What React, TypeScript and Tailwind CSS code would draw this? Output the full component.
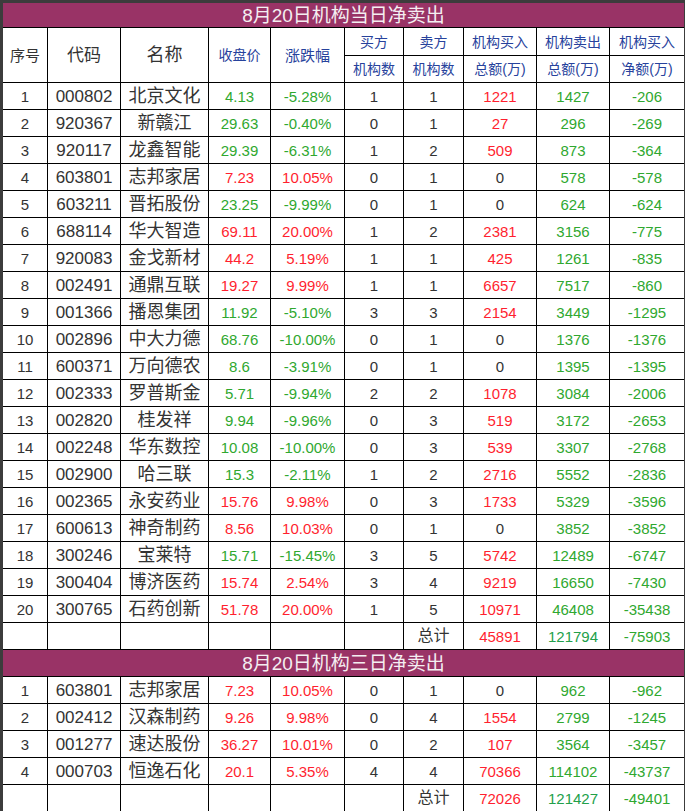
import React from "react";

type Row = [string, string, string, string, string, string, string, string, string, string];

const day: Row[] = [
  ["1", "000802", "北京文化", "4.13", "-5.28%", "1", "1", "1221", "1427", "-206"],
  ["2", "920367", "新赣江", "29.63", "-0.40%", "0", "1", "27", "296", "-269"],
  ["3", "920117", "龙鑫智能", "29.39", "-6.31%", "1", "2", "509", "873", "-364"],
  ["4", "603801", "志邦家居", "7.23", "10.05%", "0", "1", "0", "578", "-578"],
  ["5", "603211", "晋拓股份", "23.25", "-9.99%", "0", "1", "0", "624", "-624"],
  ["6", "688114", "华大智造", "69.11", "20.00%", "1", "2", "2381", "3156", "-775"],
  ["7", "920083", "金戈新材", "44.2", "5.19%", "1", "1", "425", "1261", "-835"],
  ["8", "002491", "通鼎互联", "19.27", "9.99%", "1", "1", "6657", "7517", "-860"],
  ["9", "001366", "播恩集团", "11.92", "-5.10%", "3", "3", "2154", "3449", "-1295"],
  ["10", "002896", "中大力德", "68.76", "-10.00%", "0", "1", "0", "1376", "-1376"],
  ["11", "600371", "万向德农", "8.6", "-3.91%", "0", "1", "0", "1395", "-1395"],
  ["12", "002333", "罗普斯金", "5.71", "-9.94%", "2", "2", "1078", "3084", "-2006"],
  ["13", "002820", "桂发祥", "9.94", "-9.96%", "0", "3", "519", "3172", "-2653"],
  ["14", "002248", "华东数控", "10.08", "-10.00%", "0", "3", "539", "3307", "-2768"],
  ["15", "002900", "哈三联", "15.3", "-2.11%", "1", "2", "2716", "5552", "-2836"],
  ["16", "002365", "永安药业", "15.76", "9.98%", "0", "3", "1733", "5329", "-3596"],
  ["17", "600613", "神奇制药", "8.56", "10.03%", "0", "1", "0", "3852", "-3852"],
  ["18", "300246", "宝莱特", "15.71", "-15.45%", "3", "5", "5742", "12489", "-6747"],
  ["19", "300404", "博济医药", "15.74", "2.54%", "3", "4", "9219", "16650", "-7430"],
  ["20", "300765", "石药创新", "51.78", "20.00%", "1", "5", "10971", "46408", "-35438"],
];

const three: Row[] = [
  ["1", "603801", "志邦家居", "7.23", "10.05%", "0", "1", "0", "962", "-962"],
  ["2", "002412", "汉森制药", "9.26", "9.98%", "0", "4", "1554", "2799", "-1245"],
  ["3", "001277", "速达股份", "36.27", "10.01%", "0", "2", "107", "3564", "-3457"],
  ["4", "000703", "恒逸石化", "20.1", "5.35%", "4", "4", "70366", "114102", "-43737"],
];

const COLS = "grid grid-cols-[44px_72px_87px_61px_73px_58px_59px_72px_72px_74px] gap-px";
const NUM = "font-['Liberation_Sans',Arial,sans-serif]";
const CJK = "font-['Liberation_Sans','Noto_Sans_CJK_SC',sans-serif]";
const RED = "text-[#ff1f2f]";
const GREEN = "text-[#2fa82f]";
const DARK = "text-[#333333]";
const BLUE = "text-[#27429c]";

function Cell({ children, cls = "" }: { children?: React.ReactNode; cls?: string }) {
  return (
    <div className={`flex items-center justify-center bg-white leading-none whitespace-nowrap ${cls}`}>
      {children}
    </div>
  );
}

function DataRow({ r }: { r: Row }) {
  const up = !r[4].startsWith("-");
  const pc = up ? RED : GREEN;
  const buy = r[7] === "0" ? DARK : RED;
  return (
    <div className={`${COLS} h-[26px]`}>
      <Cell cls={`${NUM} ${DARK} text-[15px]`}>{r[0]}</Cell>
      <Cell cls={`${NUM} ${DARK} text-[17px]`}>{r[1]}</Cell>
      <Cell cls={`${CJK} ${DARK} text-[18px]`}>{r[2]}</Cell>
      <Cell cls={`${NUM} ${pc} text-[15px]`}>{r[3]}</Cell>
      <Cell cls={`${NUM} ${pc} text-[15px]`}>{r[4]}</Cell>
      <Cell cls={`${NUM} ${DARK} text-[15px]`}>{r[5]}</Cell>
      <Cell cls={`${NUM} ${DARK} text-[15px]`}>{r[6]}</Cell>
      <Cell cls={`${NUM} ${buy} text-[15px]`}>{r[7]}</Cell>
      <Cell cls={`${NUM} ${GREEN} text-[15px]`}>{r[8]}</Cell>
      <Cell cls={`${NUM} ${GREEN} text-[15px]`}>{r[9]}</Cell>
    </div>
  );
}

function TotalRow({ a, b, c }: { a: string; b: string; c: string }) {
  return (
    <div className={`${COLS} h-[26px]`}>
      <Cell />
      <Cell />
      <Cell />
      <Cell />
      <Cell />
      <Cell />
      <Cell cls={`${CJK} ${DARK} text-[16px] bg-[#dce6f1]`}>总计</Cell>
      <Cell cls={`${NUM} ${RED} text-[15px] bg-[#dce6f1]`}>{a}</Cell>
      <Cell cls={`${NUM} text-[#22a04a] text-[15px] bg-[#dce6f1]`}>{b}</Cell>
      <Cell cls={`${NUM} ${GREEN} text-[15px] bg-[#dce6f1]`}>{c}</Cell>
    </div>
  );
}

function Title({ text, h }: { text: string; h: string }) {
  return (
    <div
      className={`${h} flex items-center justify-center bg-[#993366] text-[#f4eef1] text-[19px] leading-none ${CJK}`}
    >
      {text}
    </div>
  );
}

function Header() {
  const two = (a: string, b: string) => (
    <div className="flex flex-col gap-px bg-black">
      <Cell cls={`${CJK} ${BLUE} text-[14px] h-[27px]`}>{a}</Cell>
      <Cell cls={`${CJK} ${BLUE} text-[14px] h-[26px]`}>{b}</Cell>
    </div>
  );
  return (
    <div className={`${COLS} h-[54px]`}>
      <Cell cls={`${CJK} ${DARK} text-[15px]`}>序号</Cell>
      <Cell cls={`${CJK} ${DARK} text-[17px]`}>代码</Cell>
      <Cell cls={`${CJK} ${DARK} text-[18px]`}>名称</Cell>
      <Cell cls={`${CJK} ${BLUE} text-[14px]`}>收盘价</Cell>
      <Cell cls={`${CJK} ${BLUE} text-[15px]`}>涨跌幅</Cell>
      {two("买方", "机构数")}
      {two("卖方", "机构数")}
      {two("机构买入", "总额(万)")}
      {two("机构卖出", "总额(万)")}
      {two("机构买入", "净额(万)")}
    </div>
  );
}

export default function App() {
  return (
    <div className="w-[685px] h-[811px] overflow-hidden bg-[#3c3c3c] pl-[3px] pt-[3px] pr-px">
      <div className="flex flex-col gap-px bg-black">
        <Title text="8月20日机构当日净卖出" h="h-[24px]" />
        <Header />
        {day.map((r) => (
          <DataRow key={"d" + r[0]} r={r} />
        ))}
        <TotalRow a="45891" b="121794" c="-75903" />
        <Title text="8月20日机构三日净卖出" h="h-[26px]" />
        {three.map((r) => (
          <DataRow key={"t" + r[0]} r={r} />
        ))}
        <TotalRow a="72026" b="121427" c="-49401" />
      </div>
    </div>
  );
}
